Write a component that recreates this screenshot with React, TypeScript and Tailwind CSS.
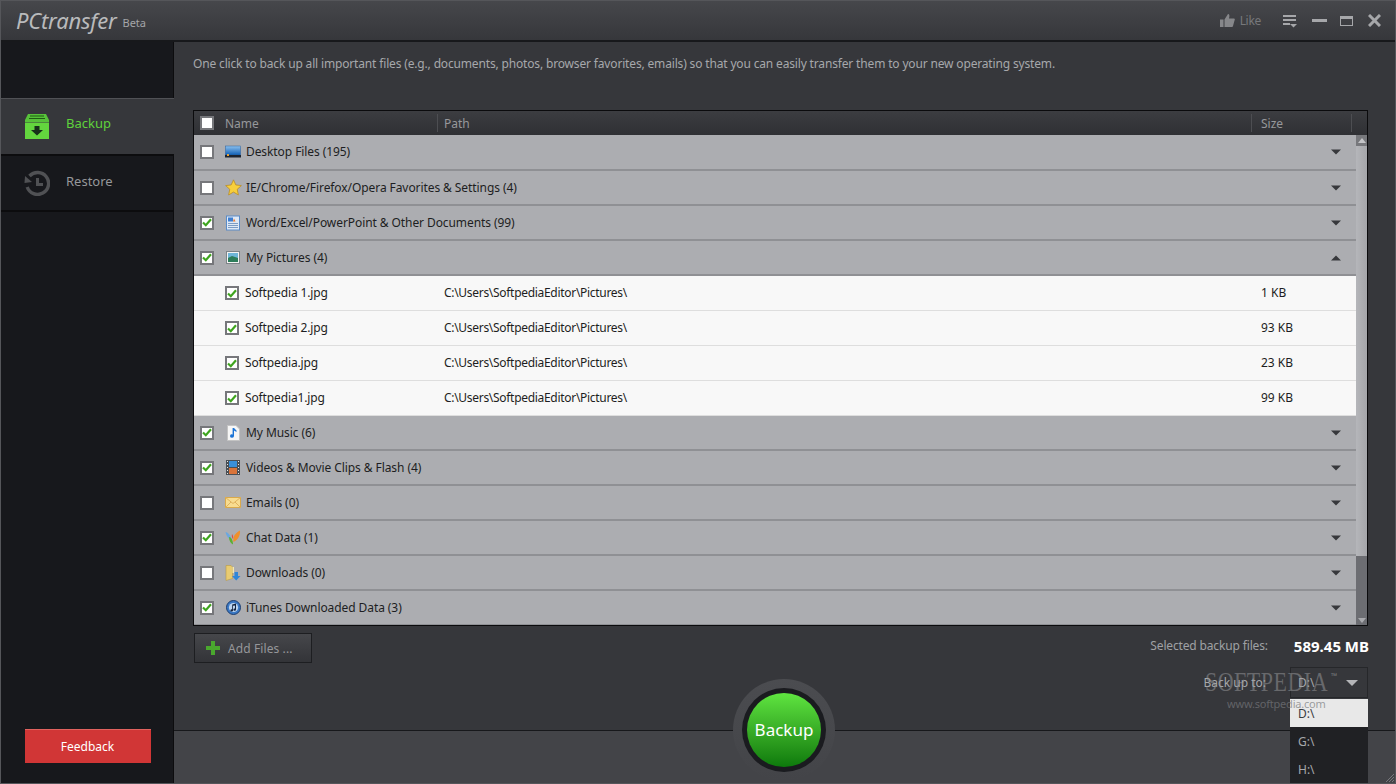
import { ReactNode } from "react";

const font = { fontFamily: '"Noto Sans", Tahoma, sans-serif' };

function Caret({ up }: { up?: boolean }) {
  return (
    <svg width="10" height="6" viewBox="0 0 10 6" className="shrink-0">
      <path d={up ? "M5 0.5 L10 5.5 H0 Z" : "M0 0.5 H10 L5 5.5 Z"} fill="#37383c" />
    </svg>
  );
}

function Check({ on }: { on: boolean }) {
  return (
    <span className="w-[14px] h-[14px] shrink-0 bg-white border-2 border-[#76777b] flex items-center justify-center">
      {on && (
        <svg width="10" height="9" viewBox="0 0 10 9">
          <path d="M1 4.5 L3.8 7.2 L9 1.2" fill="none" stroke="#3fa51f" strokeWidth="2.2" />
        </svg>
      )}
    </span>
  );
}

const icons: Record<string, ReactNode> = {
  desktop: (
    <svg width="16" height="14" viewBox="0 0 16 14">
      <defs>
        <linearGradient id="dk" x1="0" y1="0" x2="0" y2="1">
          <stop offset="0" stopColor="#8cc0ee" />
          <stop offset="1" stopColor="#0f5fb5" />
        </linearGradient>
      </defs>
      <rect x="0.5" y="1" width="15" height="9" fill="url(#dk)" stroke="#2a5f9a" strokeWidth="0.5" />
      <rect x="0" y="10" width="16" height="2.5" fill="#1c2430" />
      <rect x="2" y="9" width="2" height="2" fill="#e8a23a" />
    </svg>
  ),
  star: (
    <svg width="17" height="17" viewBox="0 0 16 16">
      <path d="M8 0.8 L10.2 5.6 L15.4 6.2 L11.5 9.7 L12.6 15 L8 12.3 L3.4 15 L4.5 9.7 L0.6 6.2 L5.8 5.6 Z" fill="#f7cf3c" stroke="#b98a20" strokeWidth="0.7" />
    </svg>
  ),
  doc: (
    <svg width="14" height="16" viewBox="0 0 14 15">
      <rect x="0.5" y="0.5" width="13" height="14" fill="#dfe9f6" stroke="#5b8cc8" />
      <rect x="2" y="2" width="5" height="4" fill="#3f7fd0" />
      <path d="M8 3 L9.5 6 H7 Z" fill="#e8762a" />
      <path d="M2 8 H12 M2 10 H12 M2 12 H12" stroke="#7c9cc4" strokeWidth="1" />
    </svg>
  ),
  picture: (
    <svg width="14" height="13" viewBox="0 0 14 13">
      <rect x="0.5" y="0.5" width="13" height="12" fill="#f3f3f3" stroke="#7e8488" />
      <rect x="2" y="2" width="10" height="5" fill="#6fb6d8" />
      <path d="M2 7 L6 5 L12 7 V11 H2 Z" fill="#2d7d5a" />
    </svg>
  ),
  music: (
    <svg width="13" height="16" viewBox="0 0 13 16">
      <path d="M0.5 0.5 H9 L12.5 4 V15.5 H0.5 Z" fill="#f6f6f6" stroke="#c4c4c4" />
      <path d="M7 3 V11 A2 1.7 0 1 1 5.6 9.4 V3 Z M7 3 L9.5 5.5 V7 L7 5.5 Z" fill="#1b73d6" />
    </svg>
  ),
  film: (
    <svg width="14" height="15" viewBox="0 0 14 15">
      <rect x="0" y="0" width="14" height="15" fill="#4a4f55" />
      <rect x="3" y="1" width="8" height="6" fill="#3a8fd8" />
      <rect x="3" y="8" width="8" height="6" fill="#d9743a" />
      <path d="M1 1.5 H2 M1 4.5 H2 M1 7.5 H2 M1 10.5 H2 M1 13.5 H2 M12 1.5 H13 M12 4.5 H13 M12 7.5 H13 M12 10.5 H13 M12 13.5 H13" stroke="#e6e6e6" strokeWidth="1.2" />
    </svg>
  ),
  mail: (
    <svg width="16" height="11" viewBox="0 0 16 11">
      <rect x="0.5" y="0.5" width="15" height="10" fill="#f8dc90" stroke="#d9a94c" />
      <path d="M0.5 0.5 L8 6.5 L15.5 0.5 M0.5 10.5 L6 5 M15.5 10.5 L10 5" fill="none" stroke="#dfb25e" />
    </svg>
  ),
  chat: (
    <svg width="16" height="15" viewBox="0 0 16 15">
      <path d="M0.5 2 C3 2 6 6 7 11 C4 9 1 6 0.5 2 Z" fill="#6aa8e0" />
      <path d="M15 0.5 C15.5 5 13 10 8.5 12 C7.5 7 10 3 15 0.5 Z" fill="#f08f2a" />
      <path d="M4 7 C6 7 8 10 8 14.5 C6 13.5 4 11 4 7 Z" fill="#5cb030" />
      <path d="M7 4 C8 5 8.5 7 8 9 C7 8 6.5 6 7 4 Z" fill="#e24d3c" />
    </svg>
  ),
  folder: (
    <svg width="16" height="16" viewBox="0 0 16 16">
      <path d="M1 0.5 H6 L7.5 2 V13.5 L1 15.5 Z" fill="#e8cb72" stroke="#b89a44" strokeWidth="0.6" />
      <path d="M7.5 2 H9 V8 H7.5 Z" fill="#f5e7ae" />
      <path d="M9.5 7 H13 V11 H15.5 L11.2 15.5 L7 11 H9.5 Z" fill="#2f86d8" />
    </svg>
  ),
  itunes: (
    <svg width="15" height="15" viewBox="0 0 15 15">
      <circle cx="7.5" cy="7.5" r="7" fill="#3a78c4" stroke="#1e3f70" />
      <circle cx="7.5" cy="7.5" r="4.6" fill="#bcd4ee" />
      <path d="M6.2 4.4 L10 3.6 V9.6 A1.3 1.1 0 1 1 9 8.6 V5.4 L7 5.8 V10.4 A1.3 1.1 0 1 1 6.2 9.4 Z" fill="#14243e" />
    </svg>
  ),
};

type Group = { name: string; icon: string; on: boolean; open?: boolean };

const groupsTop: Group[] = [
  { name: "Desktop Files (195)", icon: "desktop", on: false },
  { name: "IE/Chrome/Firefox/Opera Favorites & Settings (4)", icon: "star", on: false },
  { name: "Word/Excel/PowerPoint & Other Documents (99)", icon: "doc", on: true },
  { name: "My Pictures (4)", icon: "picture", on: true, open: true },
];

const files = [
  { name: "Softpedia 1.jpg", size: "1 KB" },
  { name: "Softpedia 2.jpg", size: "93 KB" },
  { name: "Softpedia.jpg", size: "23 KB" },
  { name: "Softpedia1.jpg", size: "99 KB" },
];

const groupsBottom: Group[] = [
  { name: "My Music (6)", icon: "music", on: true },
  { name: "Videos & Movie Clips & Flash (4)", icon: "film", on: true },
  { name: "Emails (0)", icon: "mail", on: false },
  { name: "Chat Data (1)", icon: "chat", on: true },
  { name: "Downloads (0)", icon: "folder", on: false },
  { name: "iTunes Downloaded Data (3)", icon: "itunes", on: true },
];

function GroupRow({ g }: { g: Group }) {
  return (
    <div className="h-[35px] first:h-[36px] flex items-center pl-[6px] pr-[15px] bg-[#acadb1] border-b-2 border-[#8f9094] text-[#1d1e22]">
      <Check on={g.on} />
      <span className="w-[32px] flex justify-center pl-[6px]">{icons[g.icon]}</span>
      <span className="flex-1 tracking-[-0.08px]">{g.name}</span>
      <Caret up={g.open} />
    </div>
  );
}

function FileRow({ name, size }: { name: string; size: string }) {
  return (
    <div className="h-[35px] flex items-center pl-[31px] bg-[#f8f8f8] border-b border-[#dedede] text-[#1d1e22]">
      <Check on />
      <span className="ml-[6px] w-[199px] tracking-[-0.13px]">{name}</span>
      <span className="w-[817px] tracking-[-0.3px]">C:\Users\SoftpediaEditor\Pictures\</span>
      <span>{size}</span>
    </div>
  );
}

export default function App() {
  return (
    <div
      style={font}
      className="relative w-[1396px] h-[784px] overflow-hidden flex flex-col bg-[#36373b] border border-[#55565a] text-[12px]"
    >
      {/* title bar */}
      <div className="h-[41px] shrink-0 flex items-center pl-[15px] pr-[14px] bg-gradient-to-b from-[#46474b] to-[#36373b] border-b-2 border-[#17181b]">
        <span className="text-[22px] italic text-[#b9babc] leading-none tracking-[-0.2px] mb-[1px]">PCtransfer</span>
        <span className="ml-[6px] mt-[6px] text-[11px] text-[#a4a5a8]">Beta</span>
        <div className="ml-auto flex items-center">
          <svg width="15" height="13" viewBox="0 0 15 13">
            <path d="M0 5.5 H3.5 V13 H0 Z M4.5 5.5 L8 0 C9.5 0 9.8 1.5 9 4.5 H14 C15 4.5 15 6 14.5 6.5 L13 12 C12.8 12.7 12.4 13 11.6 13 H4.5 Z" fill="#86878a" />
          </svg>
          <span className="ml-[5px] text-[#77787b] tracking-[-0.3px]">Like</span>
          <svg width="15" height="14" viewBox="0 0 15 14" className="ml-[22px]">
            <path d="M0 2 H13 M0 6 H13 M0 10 H7" stroke="#a6a7aa" strokeWidth="2" />
            <path d="M7 10 H14 L10.5 13.5 Z" fill="#a6a7aa" />
          </svg>
          <span className="ml-[14px] w-[15px] h-[3px] bg-[#a6a7aa]" />
          <span className="ml-[13px] w-[13px] h-[10px] border border-[#a6a7aa] border-t-[3px]" />
          <svg width="13" height="13" viewBox="0 0 13 13" className="ml-[15px]">
            <path d="M1 1 L12 12 M12 1 L1 12" stroke="#a6a7aa" strokeWidth="3" />
          </svg>
        </div>
      </div>

      <div className="flex-1 flex min-h-0">
        {/* sidebar */}
        <div className="w-[173px] shrink-0 flex flex-col">
          <div className="h-[56px] bg-[#17181c] border-r border-[#0c0c0e]" />
          <div className="h-[56px] flex items-center pl-[24px] bg-[#36373b] border-t border-[#505155]">
            <svg width="24" height="25" viewBox="0 0 24 25">
              <path d="M3 0 H21 L24 6 V8 H0 V6 Z" fill="#57c23a" />
              <path d="M5 2 H19 M4 4.5 H20" stroke="#1f5c13" strokeWidth="1" />
              <rect x="0" y="8.5" width="24" height="16.5" fill="#63d63e" />
              <path d="M9.5 12 H14.5 V16 H18 L12 21.5 L6 16 H9.5 Z" fill="#17301a" />
            </svg>
            <span className="ml-[17px] mb-[6px] text-[13px] text-[#5fd23c]">Backup</span>
          </div>
          <div className="h-[58px] flex items-center pl-[23px] bg-[#17181c] border-t-2 border-b-2 border-[#0c0c0e] border-r">
            <svg width="26" height="26" viewBox="0 0 26 26">
              <path d="M5.5 6 A11 11 0 1 1 3.2 17" fill="none" stroke="#505154" strokeWidth="3.4" />
              <path d="M1 6 L8 12 L0.5 13 Z" fill="#505154" />
              <path d="M13.5 8 V14.5 H19" fill="none" stroke="#505154" strokeWidth="3" />
            </svg>
            <span className="ml-[16px] mb-[3px] text-[13px] text-[#96979a]">Restore</span>
          </div>
          <div className="flex-1 flex flex-col justify-end items-center pb-[20px] pl-[1px] bg-[#17181c] border-r border-[#0c0c0e]">
            <button className="w-[126px] h-[34px] bg-[#d13636] border-t border-[#e0625e] text-white text-[12px]">
              Feedback
            </button>
          </div>
        </div>

        {/* main */}
        <div className="flex-1 min-w-0 flex flex-col">
          <div className="flex-1 min-h-0 flex flex-col pl-[19px] pr-[27px]">
            <p className="h-[68px] pt-[13px] text-[#a6a8ab] tracking-[-0.16px]">
              One click to back up all important files (e.g., documents, photos, browser favorites, emails) so that you can easily transfer them to your new operating system.
            </p>

            {/* table */}
            <div className="h-[516px] shrink-0 flex flex-col border border-[#0b0b0d] overflow-hidden">
              <div className="h-[24px] shrink-0 flex items-center pl-[6px] bg-gradient-to-b from-[#3c3d41] to-[#2f3034] text-[#97989b]">
                <span className="w-[14px] h-[14px] bg-white border-2 border-[#76777b]" />
                <span className="ml-[11px] w-[212px] mt-[2px]">Name</span>
                <span className="w-[814px] h-[18px] flex items-center pl-[6px] pt-[2px] border-l border-[#4d4e52]">Path</span>
                <span className="w-[101px] h-[18px] flex items-center pl-[9px] pt-[2px] border-x border-[#4d4e52]">Size</span>
              </div>
              <div className="flex-1 min-h-0 flex">
                <div className="flex-1 min-w-0">
                  {groupsTop.map((g) => (
                    <GroupRow key={g.name} g={g} />
                  ))}
                  {files.map((f) => (
                    <FileRow key={f.name} name={f.name} size={f.size} />
                  ))}
                  {groupsBottom.map((g) => (
                    <GroupRow key={g.name} g={g} />
                  ))}
                </div>
                {/* scrollbar */}
                <div className="w-[11px] shrink-0 flex flex-col bg-[#6c6d72]">
                  <div className="h-[11px] flex items-center justify-center bg-[#77787c]">
                    <svg width="8" height="5" viewBox="0 0 8 5"><path d="M4 0 L8 5 H0 Z" fill="#c4c5c8" /></svg>
                  </div>
                  <div className="h-[410px] bg-gradient-to-r from-[#b5b6ba] to-[#a5a6aa]" />
                  <div className="flex-1 flex items-end justify-center pb-[2px]">
                    <svg width="8" height="5" viewBox="0 0 8 5"><path d="M0 0 H8 L4 5 Z" fill="#a9aaae" /></svg>
                  </div>
                </div>
              </div>
            </div>

            {/* footer row */}
            <div className="flex items-start justify-between pt-[7px] pl-[1px]">
              <button className="w-[118px] h-[30px] flex items-center pl-[11px] bg-gradient-to-b from-[#46474b] to-[#333438] border border-[#1d1e21] text-[#96979a]">
                <svg width="14" height="14" viewBox="0 0 14 14">
                  <path d="M5 0 H9 V5 H14 V9 H9 V14 H5 V9 H0 V5 H5 Z" fill="#4aa82e" />
                </svg>
                <span className="ml-[8px] mt-[2px] tracking-[0.1px]">Add Files ...</span>
              </button>
              <div className="flex flex-col items-end">
                <div className="flex items-center h-[26px] -mr-px">
                  <span className="text-[#9fa1a4] tracking-[-0.15px]">Selected backup files:</span>
                  <span className="ml-[26px] text-[15px] font-bold text-white">589.45 MB</span>
                </div>
                <div className="flex items-center mt-[8px] h-[31px]">
                  <span className="text-[#a6a8ab]">Back up to:</span>
                  <div className="ml-[24px] w-[78px] h-[31px] flex items-center justify-between pl-[7px] pr-[9px] border border-[#26272a] text-[#a6a8ab]">
                    <span>D:\</span>
                    <svg width="12" height="6" viewBox="0 0 12 6"><path d="M0 0 H12 L6 6 Z" fill="#b4b5b8" /></svg>
                  </div>
                </div>
              </div>
            </div>
          </div>

          {/* bottom band */}
          <div className="h-[53px] shrink-0 bg-[#434448] border-t border-[#17181b]" />
        </div>
      </div>

      {/* drive list */}
      <div className="absolute left-[1289px] top-[698px] w-[78px] h-[86px] flex flex-col bg-[#202124] text-[#a6a8ab]">
        <div className="h-[28px] flex items-center pl-[8px] pt-[1px] bg-[#e8e8e8] text-[#3a3b3e]">D:\</div>
        <div className="h-[28px] flex items-center pl-[8px] pt-[1px]">G:\</div>
        <div className="h-[28px] flex items-center pl-[8px] pt-[1px]">H:\</div>
      </div>

      {/* watermark */}
      <div
        className="absolute left-[1204px] top-[667px] text-[22px] leading-[28px] tracking-[0.5px] scale-y-125 text-[#9a9b9e]/50 pointer-events-none"
        style={{ fontFamily: '"Liberation Serif", serif' }}
      >
        SOFTPEDIA
      </div>
      <div className="absolute left-[1330px] top-[669px] text-[8px] text-[#77787b] pointer-events-none">™</div>
      <div className="absolute left-[1226px] top-[695px] text-[11px] tracking-[-0.2px] text-[#77787b]/70 pointer-events-none">www.softpedia.com</div>

      {/* big round button */}
      <div className="absolute left-[732px] top-[678px] w-[102px] h-[102px] rounded-full bg-gradient-to-b from-[#4b4c50] to-[#434448] flex items-center justify-center">
        <div className="w-[84px] h-[84px] rounded-full bg-[#1a1b1f] flex items-center justify-center">
          <div className="w-[74px] h-[74px] rounded-full bg-gradient-to-b from-[#5fe540] to-[#0c7a0c] flex items-center justify-center text-white text-[17px]">
            Backup
          </div>
        </div>
      </div>

      {/* resize grip */}
      <svg width="10" height="10" viewBox="0 0 10 10" className="absolute right-0 bottom-0">
        <path d="M9 1 L1 9 M9 4 L4 9 M9 7 L7 9" stroke="#77787c" />
      </svg>
    </div>
  );
}
